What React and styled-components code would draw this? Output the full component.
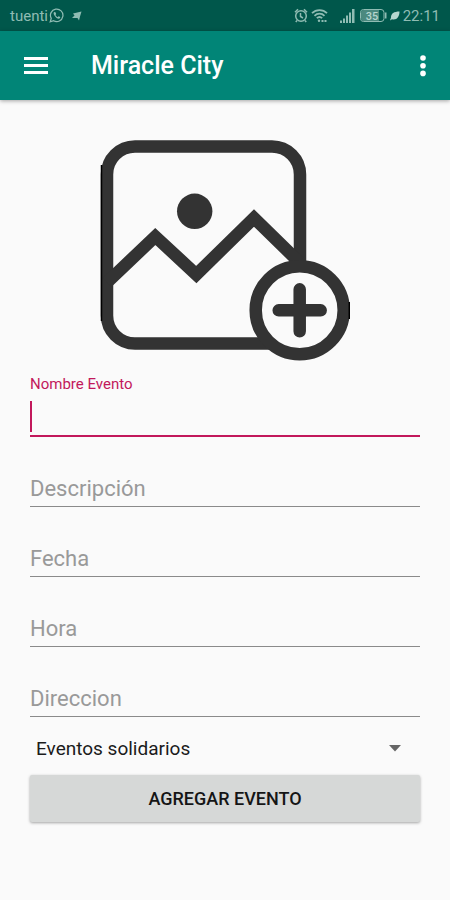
import React, { useState, } from 'react';
import styled, { createGlobalStyle, } from 'styled-components';


const GlobalStyle = createGlobalStyle`
* {
  box-sizing: border-box;
}
body {
  margin: 0;
  background: #fafafa;
  font-family: Roboto, "Liberation Sans", sans-serif;
}
`;

const StatusBar = styled.div`
display: flex;
align-items: center;
justify-content: space-between;
height: 31px;
padding: 0 10px;
background: #00574b;
color: #8fbcb3;
font-size: 15px;
`;

const StatusGroup = styled.div`
display: flex;
align-items: center;
gap: ${({ gap, }) => gap}px;
`;

const Signal = styled.svg`
margin: 0 2px 0 9px;
`;

const AppBar = styled.header`
display: flex;
align-items: center;
height: 69px;
padding: 0 16px;
background: #018577;
box-shadow: 0 1px 4px rgba(0, 0, 0, 0.35);
color: #fff;
`;

const IconButton = styled.button`
display: flex;
align-items: center;
justify-content: ${({ $end, }) => $end ? 'flex-end' : 'center'};
width: 40px;
height: 40px;
padding: 0;
border: 0;
background: none;
color: inherit;
cursor: pointer;
`;

const Title = styled.h1`
flex: 1;
margin: 0 0 0 35px;
font-size: 25px;
font-weight: 500;
line-height: 32px;
`;

const Form = styled.form`
display: flex;
flex-direction: column;
padding: 39px 30px;
`;

const Picture = styled.button`
align-self: center;
padding: 0;
border: 0;
background: none;
cursor: pointer;

& > svg {
  display: block;
}
`;

const FieldBox = styled.div`
position: relative;
height: ${({ $first, }) => $first ? '75' : '70'}px;
padding-top: ${({ $first, }) => $first ? '35' : '30'}px;
`;

const FieldLabel = styled.label`
position: absolute;
left: 0;
top: ${({ $floating, $first, }) => $floating ? ($first ? '13' : '8') : '40'}px;
color: ${({ $active, }) => $active ? '#c2185b' : '#999'};
font-size: ${({ $floating, }) => $floating ? '15' : '22'}px;
line-height: ${({ $floating, }) => $floating ? '18' : '24'}px;
pointer-events: none;
`;

const FieldInput = styled.input`
display: block;
width: 100%;
height: 40px;
padding: 0;
border: 0;
border-bottom: ${({ $active, }) => $active ? '2px solid #c2185b' : '1px solid #8a8a8a'};
border-radius: 0;
outline: 0;
background: none;
caret-color: ${({ value, }) => value ? '#c2185b' : 'transparent'};
color: #212121;
font: 22px Roboto, "Liberation Sans", sans-serif;
`;

const Caret = styled.span`
position: absolute;
left: 0;
bottom: 5px;
width: 2px;
height: 31px;
background: #c2185b;
`;

const SelectBox = styled.div`
position: relative;
margin-top: 10px;

& > svg {
  position: absolute;
  right: 19px;
  top: 18px;
  pointer-events: none;
}
`;

const Select = styled.select`
appearance: none;
display: block;
width: 100%;
height: 43px;
padding: 0 40px 0 6px;
border: 0;
background: none;
color: #1b1b1b;
font: 19px Roboto, "Liberation Sans", sans-serif;
`;

const Submit = styled.button`
height: 47px;
margin-top: 5px;
border: 0;
border-radius: 2px;
background: #d6d8d7;
box-shadow: 0 1px 3px rgba(0, 0, 0, 0.35);
color: #151515;
font: 500 18px Roboto, "Liberation Sans", sans-serif;
cursor: pointer;
`;


const WhatsappIcon = () => (
  <svg width="15" height="15" viewBox="0 0 24 24" fill="none" stroke="currentColor" strokeWidth="2">
    <path d="M2 22l1.6-5.4a10 10 0 1 1 3.8 3.8z" />
    <path d="M8.5 6.5c-1.5 1-1.5 3 .5 5.700s4.5 4.8 6.5 4.8 2.5-1.5 2.5-2.5l-2.7-1.3-1.5 1.5c-1.5-.7-2.7-1.9-3.5-3.5l1.2-1.5-1.2-3z" fill="currentColor" stroke="none" />
  </svg>
);

const FlagIcon = () => (
  <svg width="10" height="12" viewBox="0 0 10 12" fill="currentColor">
    <path d="M1 3.5L9.500 1.500 8 6.500 7 10.500 5.500 8 0 8 2.500 5.500z" />
  </svg>
);

const AlarmIcon = () => (
  <svg width="14" height="15" viewBox="0 0 14 15" fill="none" stroke="currentColor" strokeWidth="1.5">
    <circle cx="7" cy="8" r="5.3" />
    <path d="M6.5 5v3.5l2.5 1.5M1 4.2L4 1.2M13 4.2L10 1.2M3 12.5L1.8 14M11 12.5l1.2 1.5" />
  </svg>
);

const WifiIcon = () => (
  <svg width="17" height="15" viewBox="0 0 17 15" fill="none" stroke="currentColor" strokeWidth="1.8">
    <path d="M1 5.2a10.5 10.5 0 0 1 15 0M3.5 7.8a7 7 0 0 1 10 0M5.8 10.2a4 4 0 0 1 5.4 0" />
    <circle cx="8" cy="12.8" r="1.2" fill="currentColor" stroke="none" />
    <path d="M10.5 13h5" strokeDasharray="2 1" />
  </svg>
);

const SignalIcon = () => (
  <Signal width="15" height="14" viewBox="0 0 15 14" fill="currentColor">
    <path d="M0 11.5h2V14H0zM3 9.5h2V14H3zM6 6.5h2V14H6zM9 3.5h2V14H9zM12 0h2.5v14H12z" />
  </Signal>
);

const BatteryIcon = () => (
  <svg width="27" height="13" viewBox="0 0 27 13">
    <rect x="0.5" y="0.5" width="23.5" height="12" rx="3" fill="none" stroke="currentColor" />
    <path d="M3.5 1H19v11H3.500A2.5 2.5 0 0 1 1 9.500v-6A2.5 2.5 0 0 1 3.500 1z" fill="#4b897f" />
    <path d="M25 3.5h1.5v6H25z" fill="currentColor" />
    <text x="12" y="10.5" textAnchor="middle" fontSize="11" fontWeight="500" fill="#b5d6cf">35</text>
  </svg>
);

const LeafIcon = () => (
  <svg width="10" height="10" viewBox="0 0 10 10">
    <path d="M9.5 0.5C4 .5 1 2.5 1 6.5L0 9.5l2-1.3C6.5 9.5 9.5 6 9.5.5z" fill="#b5d6cf" />
  </svg>
);

const MenuIcon = () => (
  <svg width="24" height="18" viewBox="0 0 24 18" fill="currentColor">
    <path d="M0 0h24v3H0zM0 7h24v3H0zM0 14h24v3H0z" />
  </svg>
);

const MoreIcon = () => (
  <svg width="22" height="22" viewBox="0 0 22 22" fill="currentColor">
    <circle cx="11" cy="3" r="2.8" />
    <circle cx="11" cy="10.7" r="2.8" />
    <circle cx="11" cy="18.4" r="2.8" />
  </svg>
);

const AddPictureIcon = () => (
  <svg width="250" height="223" viewBox="-1 0 250 223" fill="none" stroke="#333" strokeWidth="12.5">
    <rect x="6" y="7.5" width="193" height="197" rx="28" />
    <path d="M6 143.500L54.3 97.500 95.3 135.500 153 79 198 123" />
    <circle cx="93.7" cy="72.3" r="17.7" fill="#333" stroke="none" />
    <circle cx="198.7" cy="171.3" r="44" fill="#fafafa" />
    <path d="M177.700 171.3h42M198.7 150.300v42" strokeLinecap="round" />
    <path d="M0.5 26v156M248.3 163v17" stroke="#000" strokeWidth="1.5" />
  </svg>
);


const Field = ({ id, label, first, active, value, onFocus, onChange, }) => (
  <FieldBox $first={first}>
    <FieldLabel
      htmlFor={id}
      $first={first}
      $floating={active || !!value}
      $active={active}
    >
      {label}
    </FieldLabel>
    <FieldInput
      id={id}
      $active={active}
      value={value}
      autoComplete="off"
      onFocus={onFocus}
      onChange={onChange}
    />
    {active && !value && <Caret />}
  </FieldBox>
);


const fields = [
  { id: 'nombre', label: 'Nombre Evento', },
  { id: 'descripcion', label: 'Descripción', },
  { id: 'fecha', label: 'Fecha', },
  { id: 'hora', label: 'Hora', },
  { id: 'direccion', label: 'Direccion', },
];

const App = () => {
  const [ active, setActive, ] = useState('nombre');
  const [ values, setValues, ] = useState({});

  return (
    <>
      <GlobalStyle />
      <StatusBar>
        <StatusGroup gap={8}>
          <StatusGroup gap={1}>
            <span>tuenti</span>
            <WhatsappIcon />
          </StatusGroup>
          <FlagIcon />
        </StatusGroup>
        <StatusGroup gap={3}>
          <AlarmIcon />
          <WifiIcon />
          <SignalIcon />
          <BatteryIcon />
          <LeafIcon />
          <span>22:11</span>
        </StatusGroup>
      </StatusBar>
      <AppBar>
        <IconButton type="button" aria-label="Menú">
          <MenuIcon />
        </IconButton>
        <Title>Miracle City</Title>
        <IconButton type="button" $end aria-label="Más opciones">
          <MoreIcon />
        </IconButton>
      </AppBar>
      <Form onSubmit={e => e.preventDefault()}>
        <Picture type="button" aria-label="Agregar imagen">
          <AddPictureIcon />
        </Picture>
        {fields.map(({ id, label, }, i) => (
          <Field
            key={id}
            id={id}
            label={label}
            first={i === 0}
            active={active === id}
            value={values[id] || ''}
            onFocus={() => setActive(id)}
            onChange={e => setValues({ ...values, [id]: e.target.value, })}
          />
        ))}
        <SelectBox>
          <Select aria-label="Tipo de evento">
            <option>Eventos solidarios</option>
          </Select>
          <svg width="12" height="7" viewBox="0 0 12 7" fill="#666">
            <path d="M0 0h12L6 6.5z" />
          </svg>
        </SelectBox>
        <Submit>AGREGAR EVENTO</Submit>
      </Form>
    </>
  );
};


export default App;
